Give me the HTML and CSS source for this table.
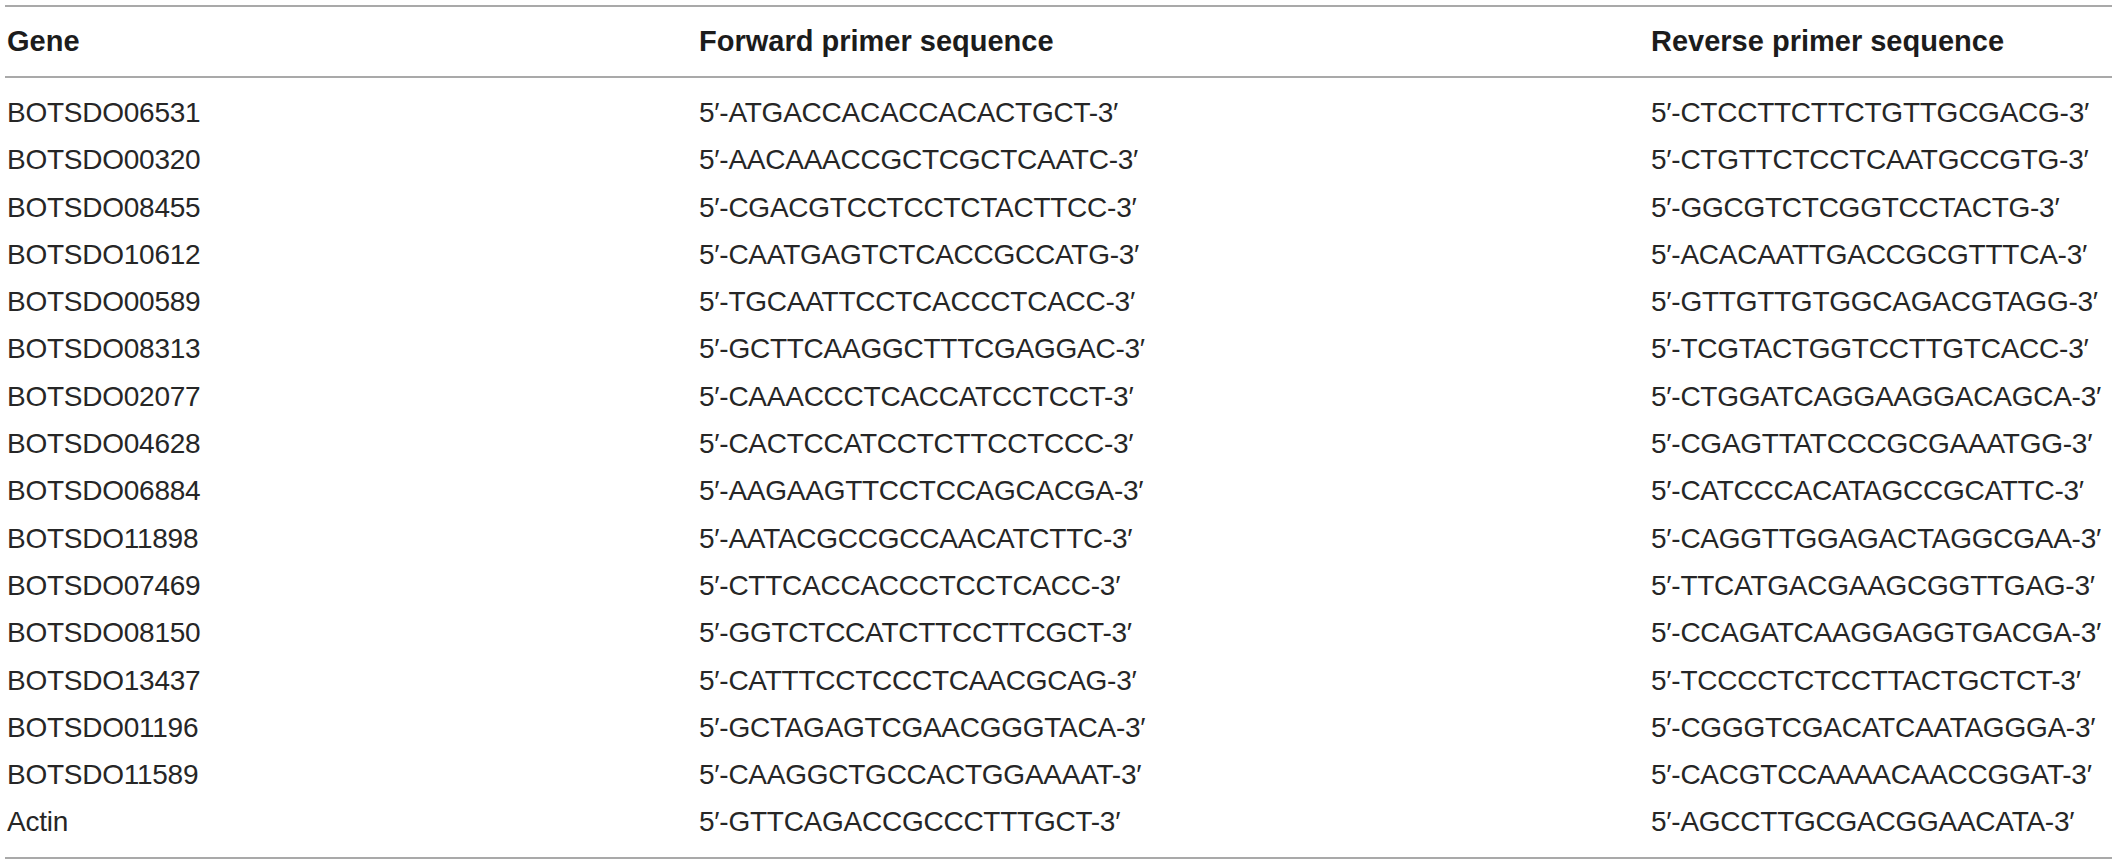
FILE: index.html
```html
<!DOCTYPE html>
<html lang="en">
<head>
<meta charset="utf-8">
<title>Primer sequences</title>
<link rel="stylesheet" href="styles.css">
</head>
<body>
<table class="primers">
  <colgroup>
    <col class="col-gene">
    <col class="col-fwd">
    <col class="col-rev">
  </colgroup>
  <thead>
    <tr><th>Gene</th><th>Forward primer sequence</th><th>Reverse primer sequence</th></tr>
  </thead>
  <tbody>
    <tr class="first"><td>BOTSDO06531</td><td>5′-ATGACCACACCACACTGCT-3′</td><td>5′-CTCCTTCTTCTGTTGCGACG-3′</td></tr>
    <tr><td>BOTSDO00320</td><td>5′-AACAAACCGCTCGCTCAATC-3′</td><td>5′-CTGTTCTCCTCAATGCCGTG-3′</td></tr>
    <tr><td>BOTSDO08455</td><td>5′-CGACGTCCTCCTCTACTTCC-3′</td><td>5′-GGCGTCTCGGTCCTACTG-3′</td></tr>
    <tr><td>BOTSDO10612</td><td>5′-CAATGAGTCTCACCGCCATG-3′</td><td>5′-ACACAATTGACCGCGTTTCA-3′</td></tr>
    <tr><td>BOTSDO00589</td><td>5′-TGCAATTCCTCACCCTCACC-3′</td><td>5′-GTTGTTGTGGCAGACGTAGG-3′</td></tr>
    <tr><td>BOTSDO08313</td><td>5′-GCTTCAAGGCTTTCGAGGAC-3′</td><td>5′-TCGTACTGGTCCTTGTCACC-3′</td></tr>
    <tr><td>BOTSDO02077</td><td>5′-CAAACCCTCACCATCCTCCT-3′</td><td>5′-CTGGATCAGGAAGGACAGCA-3′</td></tr>
    <tr><td>BOTSDO04628</td><td>5′-CACTCCATCCTCTTCCTCCC-3′</td><td>5′-CGAGTTATCCCGCGAAATGG-3′</td></tr>
    <tr><td>BOTSDO06884</td><td>5′-AAGAAGTTCCTCCAGCACGA-3′</td><td>5′-CATCCCACATAGCCGCATTC-3′</td></tr>
    <tr><td>BOTSDO11898</td><td>5′-AATACGCCGCCAACATCTTC-3′</td><td>5′-CAGGTTGGAGACTAGGCGAA-3′</td></tr>
    <tr><td>BOTSDO07469</td><td>5′-CTTCACCACCCTCCTCACC-3′</td><td>5′-TTCATGACGAAGCGGTTGAG-3′</td></tr>
    <tr><td>BOTSDO08150</td><td>5′-GGTCTCCATCTTCCTTCGCT-3′</td><td>5′-CCAGATCAAGGAGGTGACGA-3′</td></tr>
    <tr><td>BOTSDO13437</td><td>5′-CATTTCCTCCCTCAACGCAG-3′</td><td>5′-TCCCCTCTCCTTACTGCTCT-3′</td></tr>
    <tr><td>BOTSDO01196</td><td>5′-GCTAGAGTCGAACGGGTACA-3′</td><td>5′-CGGGTCGACATCAATAGGGA-3′</td></tr>
    <tr><td>BOTSDO11589</td><td>5′-CAAGGCTGCCACTGGAAAAT-3′</td><td>5′-CACGTCCAAAACAACCGGAT-3′</td></tr>
    <tr class="last"><td>Actin</td><td>5′-GTTCAGACCGCCCTTTGCT-3′</td><td>5′-AGCCTTGCGACGGAACATA-3′</td></tr>
  </tbody>
</table>
</body>
</html>
```

FILE: styles.css
```css
html, body {
  margin: 0;
  padding: 0;
  background: #ffffff;
}

.primers {
  margin: 5px 0 0 5px;
  width: 2107px;
  table-layout: fixed;
  border-collapse: collapse;
  border-top: 2px solid #a9a9a9;
  border-bottom: 2px solid #a9a9a9;
  font-family: "Liberation Sans", Arial, Helvetica, sans-serif;
  color: #262626;
}

.col-gene { width: 692px; }
.col-fwd { width: 952px; }
.col-rev { width: auto; }

.primers th {
  height: 69px;
  padding: 0 0 0 2px;
  text-align: left;
  vertical-align: middle;
  font-size: 29px;
  font-weight: bold;
  color: #1c1c1c;
  border-bottom: 2px solid #a9a9a9;
  white-space: nowrap;
}

.primers td {
  height: 47.3px;
  padding: 0 0 0 2px;
  line-height: 47.3px;
  font-size: 28px;
  letter-spacing: -0.25px;
  text-align: left;
  vertical-align: middle;
  white-space: nowrap;
}

.primers tr.first td {
  padding-top: 11px;
}

.primers tr.last td {
  padding-bottom: 11px;
}
```
